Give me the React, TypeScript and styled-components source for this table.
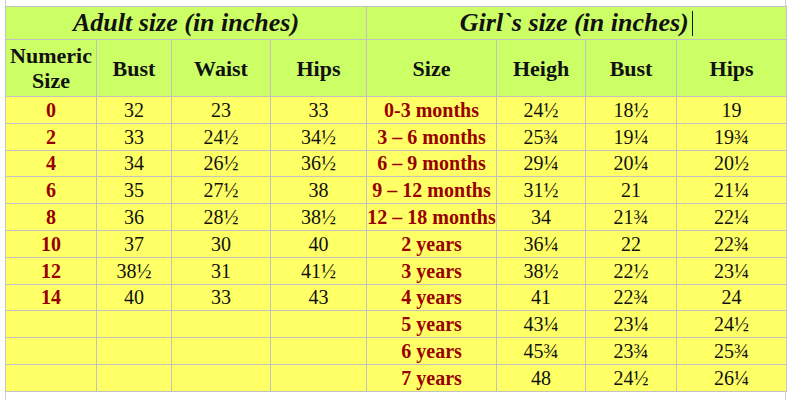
import React from "react";
import styled, { createGlobalStyle } from "styled-components";

const Global = createGlobalStyle`
  html, body { margin: 0; padding: 0; background: #ffffff; }
  body { font-family: "Liberation Serif", "Times New Roman", serif; }
`;

const Page = styled.div`
  margin-left: 5px;
  width: 781px;
  height: 400px;
  box-sizing: border-box;
  padding-top: 6px;
  border-left: 1px solid #d0d0d0;
  border-right: 1px solid #d0d0d0;
`;

const Table = styled.table`
  border-collapse: collapse;
  table-layout: fixed;
  width: 781px;
  margin-left: -1px;
  font-family: "Liberation Serif", "Times New Roman", serif;
`;

const Cell = styled.td<{ $kind: "title" | "head" | "size" | "num" | "empty" }>`
  border: 1px solid #c2c2c2;
  padding: 0;
  text-align: center;
  vertical-align: middle;
  background: ${(p) => (p.$kind === "title" || p.$kind === "head" ? "#ccff66" : "#ffff66")};
  color: ${(p) => (p.$kind === "size" ? "#990000" : "#111111")};
  font-weight: ${(p) => (p.$kind === "num" ? 400 : 700)};
  font-style: ${(p) => (p.$kind === "title" ? "italic" : "normal")};
  font-size: ${(p) => (p.$kind === "title" ? "26px" : p.$kind === "head" ? "22px" : "20px")};
  line-height: ${(p) => (p.$kind === "head" ? "25px" : "20px")};
  white-space: nowrap;
`;

const TitleRow = styled.tr`
  height: 33px;
`;

const HeadRow = styled.tr`
  height: 57px;
`;

const DataRow = styled.tr`
  height: 26.8px;
`;

const Caret = styled.span`
  display: inline-block;
  width: 1.5px;
  height: 25px;
  background: #111;
  margin-left: 3px;
  vertical-align: -5px;
`;

const widths = [91, 75, 99, 96, 130, 89, 91, 110];

const adult: [string, string, string, string][] = [
  ["0", "32", "23", "33"],
  ["2", "33", "24½", "34½"],
  ["4", "34", "26½", "36½"],
  ["6", "35", "27½", "38"],
  ["8", "36", "28½", "38½"],
  ["10", "37", "30", "40"],
  ["12", "38½", "31", "41½"],
  ["14", "40", "33", "43"],
];

const girl: [string, string, string, string][] = [
  ["0-3 months", "24½", "18½", "19"],
  ["3 – 6 months", "25¾", "19¼", "19¾"],
  ["6 – 9 months", "29¼", "20¼", "20½"],
  ["9 – 12 months", "31½", "21", "21¼"],
  ["12 – 18 months", "34", "21¾", "22¼"],
  ["2 years", "36¼", "22", "22¾"],
  ["3 years", "38½", "22½", "23¼"],
  ["4 years", "41", "22¾", "24"],
  ["5 years", "43¼", "23¼", "24½"],
  ["6 years", "45¾", "23¾", "25¾"],
  ["7 years", "48", "24½", "26¼"],
];

export default function App() {
  return (
    <>
      <Global />
      <Page>
        <Table>
          <colgroup>
            {widths.map((w, i) => (
              <col key={i} style={{ width: w }} />
            ))}
          </colgroup>
          <tbody>
            <TitleRow>
              <Cell as="th" colSpan={4} $kind="title">
                Adult size (in inches)
              </Cell>
              <Cell as="th" colSpan={4} $kind="title">
                Girl`s size (in inches)
                <Caret />
              </Cell>
            </TitleRow>
            <HeadRow>
              <Cell as="th" $kind="head">
                Numeric
                <br />
                Size
              </Cell>
              <Cell as="th" $kind="head">Bust</Cell>
              <Cell as="th" $kind="head">Waist</Cell>
              <Cell as="th" $kind="head">Hips</Cell>
              <Cell as="th" $kind="head">Size</Cell>
              <Cell as="th" $kind="head">Heigh</Cell>
              <Cell as="th" $kind="head">Bust</Cell>
              <Cell as="th" $kind="head">Hips</Cell>
            </HeadRow>
            {girl.map((g, i) => {
              const a = adult[i];
              return (
                <DataRow key={i}>
                  {a ? (
                    <>
                      <Cell $kind="size">{a[0]}</Cell>
                      <Cell $kind="num">{a[1]}</Cell>
                      <Cell $kind="num">{a[2]}</Cell>
                      <Cell $kind="num">{a[3]}</Cell>
                    </>
                  ) : (
                    <>
                      <Cell $kind="empty" />
                      <Cell $kind="empty" />
                      <Cell $kind="empty" />
                      <Cell $kind="empty" />
                    </>
                  )}
                  <Cell $kind="size">{g[0]}</Cell>
                  <Cell $kind="num">{g[1]}</Cell>
                  <Cell $kind="num">{g[2]}</Cell>
                  <Cell $kind="num">{g[3]}</Cell>
                </DataRow>
              );
            })}
          </tbody>
        </Table>
      </Page>
    </>
  );
}
